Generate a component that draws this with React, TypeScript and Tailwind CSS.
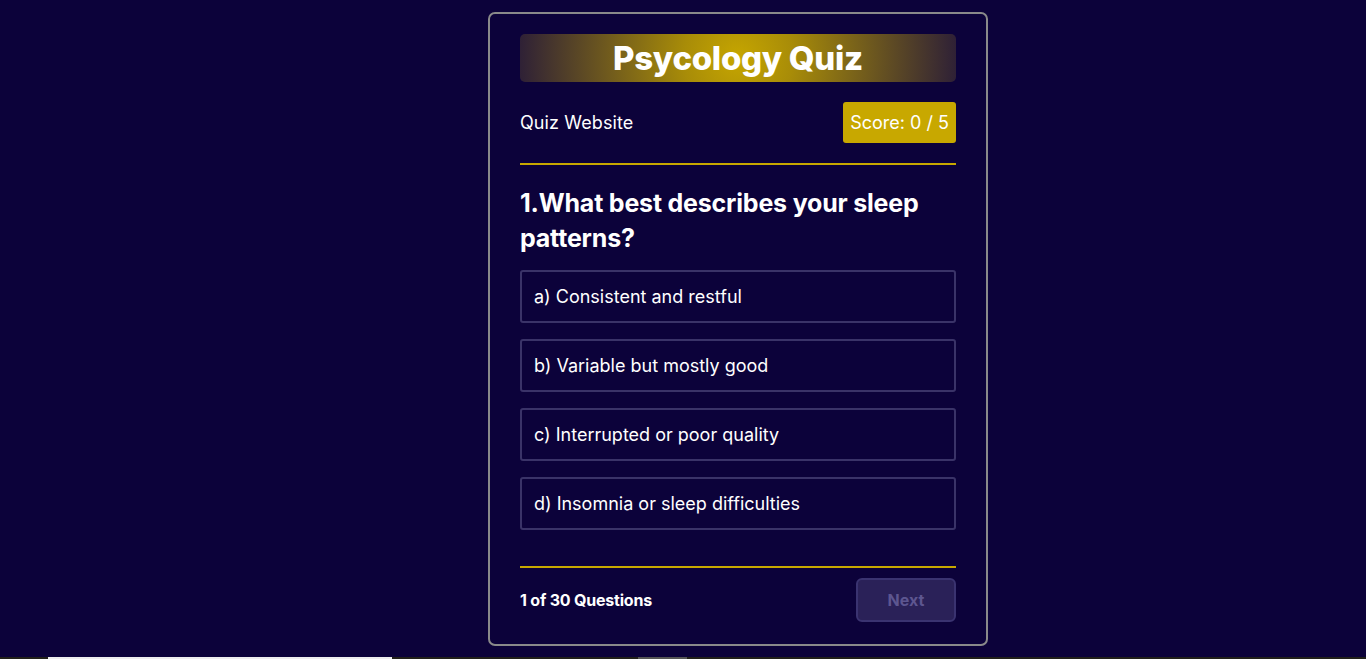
import React, { useState } from 'react';

const options = [
  'a) Consistent and restful',
  'b) Variable but mostly good',
  'c) Interrupted or poor quality',
  'd) Insomnia or sleep difficulties',
];

export default function App() {
  const [picked, setPicked] = useState<number | null>(null);

  return (
    <div className="min-h-[659px] bg-[#0c023a] font-['Inter','Noto_Sans',sans-serif] text-white flex flex-col">
      <div className="flex-1 flex justify-center pt-3 pl-[110px]">
        <div className="w-[500px] h-[634px] border-2 border-[#8a8a8a] rounded-[7px] px-[30px] pt-5 flex flex-col">
          {/* title banner */}
          <div className="h-12 rounded-[5px] bg-[radial-gradient(circle,#c6a600_0%,#a88c08_25%,#2e2036_100%)] flex items-center justify-center">
            <h1 className="text-[33px] font-extrabold tracking-[-0.3px] leading-none">Psycology Quiz</h1>
          </div>

          {/* header */}
          <div className="flex items-center justify-between mt-5">
            <span className="text-[18px] tracking-[0.1px]">Quiz Website</span>
            <span className="h-[41px] px-[7px] rounded-[3px] bg-[#c8a800] text-[18px] flex items-center">Score: 0 / 5</span>
          </div>
          <div className="h-[2px] bg-[#c8a800] mt-5" />

          {/* question */}
          <h2 className="text-[25px] font-bold leading-[35px] mt-[21px] tracking-[-0.2px]">
            1.What best describes your sleep patterns?
          </h2>

          <ul className="flex flex-col gap-4 mt-[14px]">
            {options.map((o, i) => (
              <li
                key={o}
                onClick={() => setPicked(i)}
                className={`h-[53px] border-2 rounded-[3px] pl-[12px] flex items-center text-[18px] cursor-pointer ${
                  picked === i ? 'border-[#c8a800]' : 'border-[#3a3368]'
                }`}
              >
                {o}
              </li>
            ))}
          </ul>

          <div className="h-[2px] bg-[#c8a800] mt-[36px]" />

          {/* footer */}
          <div className="flex items-center justify-between mt-[10px]">
            <span className="text-[16px] font-bold tracking-[-0.2px]">1 of 30 Questions</span>
            <button
              disabled={picked === null}
              className="w-[100px] h-[44px] rounded-[6px] bg-[#2a2158] border-2 border-[#3a3370] text-[#5d5690] text-[16px] font-bold"
            >
              Next
            </button>
          </div>
        </div>
      </div>
      <div className="h-[2px] bg-[#22201a] flex">
        <div className="ml-12 w-[344px] bg-[#eeeeee]" />
        <div className="ml-[246px] w-[49px] bg-[#555555]" />
      </div>
    </div>
  );
}
